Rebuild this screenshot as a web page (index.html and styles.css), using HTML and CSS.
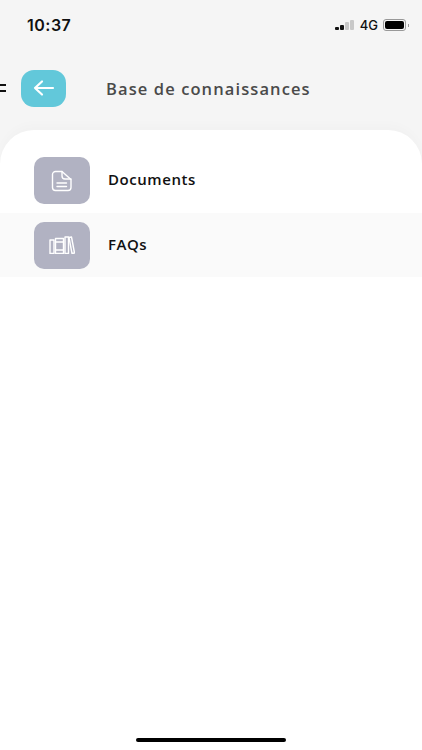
FILE: index.html
```html
<!DOCTYPE html>
<html>
  <head>
    <title>Base de connaissances</title>
    <link rel="stylesheet" href="styles.css">
  </head>
  <body>
    <div class="screen">
      <div class="status-bar">
        <span class="status-time">10:37</span>
        <div class="status-right">
          <div class="signal">
            <span class="bar bar-1"></span>
            <span class="bar bar-2"></span>
            <span class="bar bar-3 bar-off"></span>
            <span class="bar bar-4 bar-off"></span>
          </div>
          <span class="network">4G</span>
          <div class="battery"><span class="battery-level"></span></div>
          <span class="battery-cap"></span>
        </div>
      </div>

      <div class="header">
        <div class="menu-lines"><span></span><span></span></div>
        <button class="back-button">
          <svg width="22" height="18" viewBox="0 0 22 18" fill="none" stroke="#fff" stroke-width="2.2" stroke-linecap="round" stroke-linejoin="round">
            <path d="M20 9H2M9 2.500L2 9l7 6.500"/>
          </svg>
        </button>
        <h1 class="header-title">Base de connaissances</h1>
      </div>

      <div class="sheet">
        <div class="list-item">
          <div class="item-icon">
            <svg width="22" height="22" viewBox="0 0 22 22" fill="none" stroke="#fff" stroke-width="1.4" stroke-linecap="round" stroke-linejoin="round">
              <path d="M4.500 1.500h6.500l9 8v8a3 3 0 0 1-3 3h-12.500a3 3 0 0 1-3-3v-13a3 3 0 0 1 3-3z"/>
              <path d="M11 1.500v4.500a3 3 0 0 0 3 3h6"/>
              <path d="M6 13h9.500M6 16.500h9.500"/>
            </svg>
          </div>
          <span class="item-label">Documents</span>
        </div>
        <div class="list-item list-item-alt">
          <div class="item-icon">
            <svg width="26" height="18" viewBox="0 0 26 18" fill="none" stroke="#fff" stroke-width="1.4" stroke-linecap="round" stroke-linejoin="round">
              <path d="M1 4h4v13.500h-4z"/>
              <path d="M6.500 2.500h8v15h-8z"/>
              <path d="M6.500 6h8M6.500 14h8"/>
              <path d="M16 1h3.500v16.500h-3.500z"/>
              <path d="M20 1.500l2.500-.5 3 16-2.500.5z"/>
            </svg>
          </div>
          <span class="item-label">FAQs</span>
        </div>
      </div>

      <div class="home-indicator"></div>
    </div>
  </body>
</html>
```

FILE: styles.css
```css
html, body {
  margin: 0;
  padding: 0;
}

body {
  font-family: "Open Sans", sans-serif;
  background-color: #f5f5f5;
}

.screen {
  width: 422px;
  height: 750px;
  display: flex;
  flex-direction: column;
  overflow: hidden;
  position: relative;
}

.status-bar {
  height: 50px;
  padding: 0 13px 0 27px;
  display: flex;
  align-items: center;
  justify-content: space-between;
  flex-shrink: 0;
}

.status-time {
  font-family: Inter, sans-serif;
  font-size: 16px;
  font-weight: 600;
  letter-spacing: 0.5px;
  color: #111;
}

.status-right {
  display: flex;
  align-items: center;
}

.signal {
  display: flex;
  align-items: flex-end;
  gap: 1px;
  height: 10px;
  margin-right: 6px;
}

.bar {
  width: 4px;
  background-color: #111;
  border-radius: 1px;
}

.bar-1 { height: 3px; }
.bar-2 { height: 5px; }
.bar-3 { height: 8px; }
.bar-4 { height: 10px; }

.bar-off {
  background-color: #c8c8c8;
}

.network {
  font-family: Inter, sans-serif;
  font-size: 13px;
  font-weight: 500;
  color: #111;
  margin-right: 5px;
}

.battery {
  width: 19px;
  height: 8px;
  border: 1px solid #999;
  border-radius: 3px;
  padding: 1px;
}

.battery-level {
  display: block;
  width: 100%;
  height: 100%;
  background-color: #000;
  border-radius: 2px;
}

.battery-cap {
  width: 1.500px;
  height: 3px;
  background-color: #999;
  margin-left: 1.500px;
}

.header {
  height: 80px;
  padding-bottom: 4px;
  box-sizing: border-box;
  display: flex;
  align-items: center;
  flex-shrink: 0;
}

.menu-lines {
  width: 6px;
  display: flex;
  flex-direction: column;
  gap: 4px;
  margin-right: 15px;
}

.menu-lines span {
  height: 2px;
  background-color: #111;
}

.back-button {
  width: 45px;
  height: 37px;
  padding: 0;
  border: none;
  border-radius: 13px;
  background-color: #62c8da;
  display: flex;
  align-items: center;
  justify-content: center;
}

.header-title {
  margin: 0 0 0 40px;
  font-size: 16.500px;
  font-weight: 600;
  letter-spacing: 1.1px;
  color: #4a4a4a;
}

.sheet {
  flex: 1;
  background-color: #fff;
  border-radius: 34px 34px 0 0;
  padding-top: 18.250px;
  box-shadow: 0 -6px 10px rgba(0, 0, 0, 0.015);
}

.list-item {
  height: 64.500px;
  padding-left: 34px;
  display: flex;
  align-items: center;
  gap: 18px;
}

.list-item-alt {
  background-color: #fafafa;
}

.item-icon {
  width: 56px;
  height: 47px;
  border-radius: 10px;
  background-color: #b1b2c2;
  display: flex;
  align-items: center;
  justify-content: center;
}

.item-label {
  font-size: 15px;
  font-weight: 600;
  letter-spacing: 0.55px;
  line-height: 20px;
  padding-bottom: 3px;
  color: #111;
}

.home-indicator {
  position: absolute;
  left: 136px;
  bottom: 8px;
  width: 150px;
  height: 4px;
  border-radius: 2px;
  background-color: #000;
}
```
